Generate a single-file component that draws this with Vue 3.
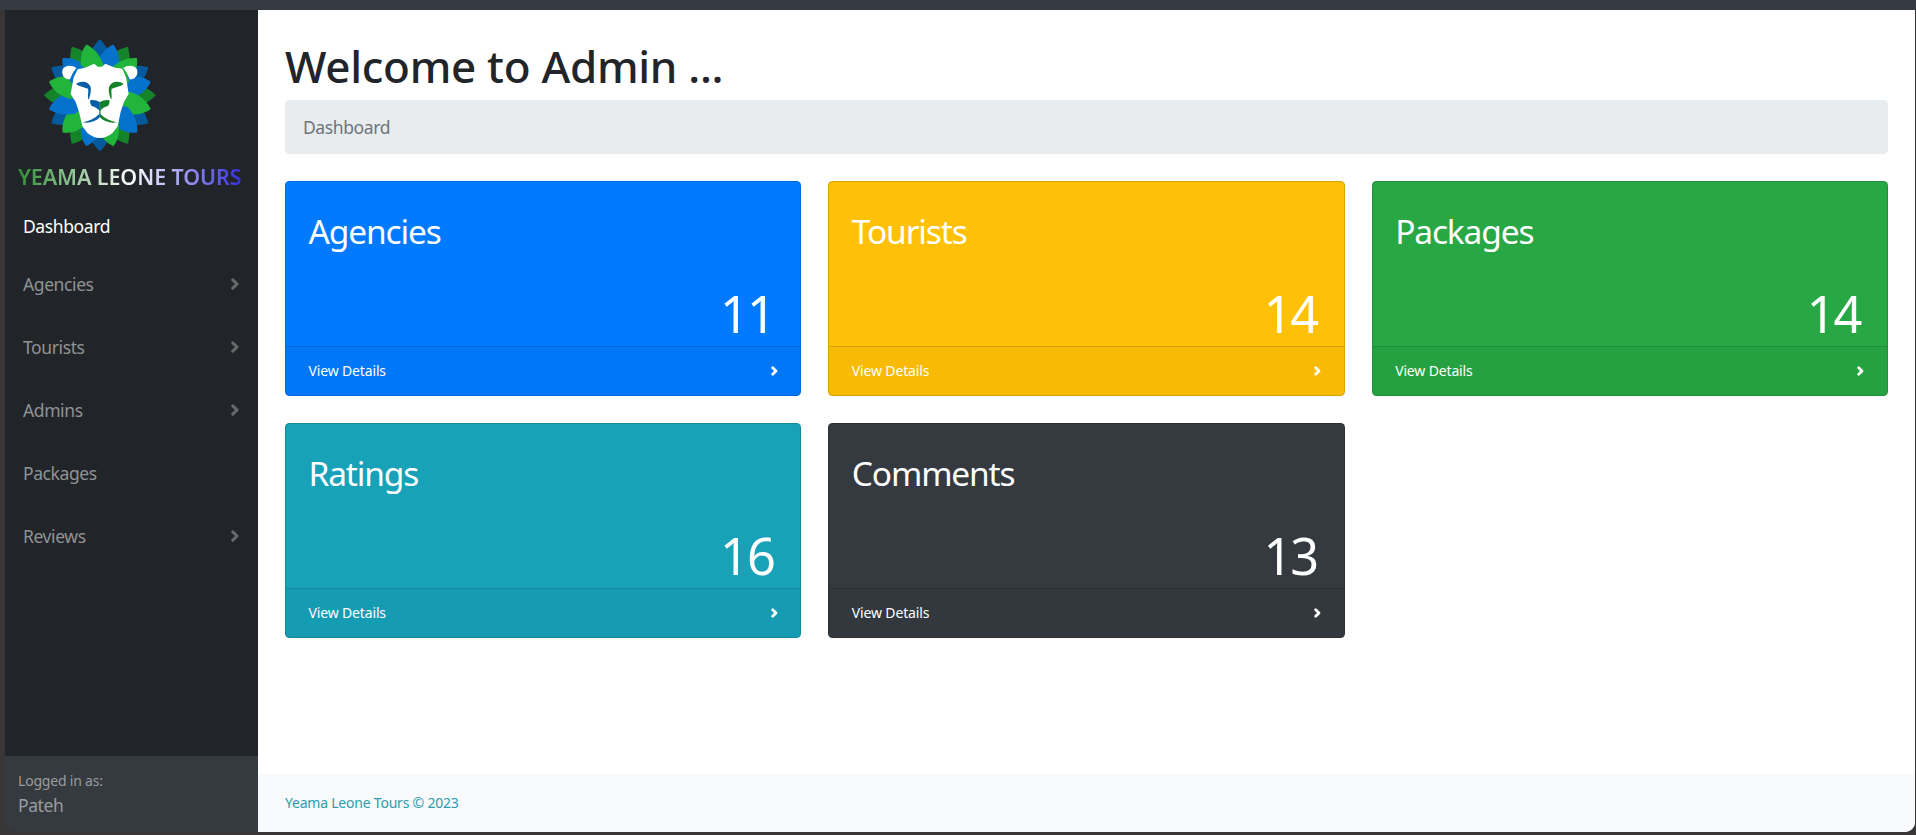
<script setup>
const links = [
  { label: 'Dashboard', active: true },
  { label: 'Agencies', arrow: true },
  { label: 'Tourists', arrow: true },
  { label: 'Admins', arrow: true },
  { label: 'Packages' },
  { label: 'Reviews', arrow: true },
]

const cards = [
  { title: 'Agencies', count: 11, tone: 'primary' },
  { title: 'Tourists', count: 14, tone: 'warning' },
  { title: 'Packages', count: 14, tone: 'success' },
  { title: 'Ratings', count: 16, tone: 'info' },
  { title: 'Comments', count: 13, tone: 'dark' },
]

// mane petals, listed clockwise from the top
const angles = Array.from({ length: 12 }, (_, i) => i * 30)
const blueBack = [0, 60, 120, 180, 240, 300]
const backPetals = angles.map((a) => ({ a, c: blueBack.includes(a) ? '#045a9c' : '#14832a' }))
const frontPetals = angles.map((a, i) => ({
  a: a + 15,
  c: i % 2 ? '#22b53c' : '#0672cb',
}))
</script>

<template>
  <div class="window">
    <div class="topbar"></div>
    <div class="shell">
      <aside class="side">
        <div class="brand">
          <svg class="logo" viewBox="0 0 390 390" width="130" height="130">
            <g transform="translate(194.5 196)">
              <path
                v-for="p in backPetals" :key="'b' + p.a" :fill="p.c"
                :transform="`rotate(${p.a})`"
                d="M0 -168C15 -154 28 -134 32 -112L0 -40L-32 -112C-28 -134 -15 -154 0 -168Z"
              />
              <path
                v-for="p in frontPetals" :key="'f' + p.a" :fill="p.c"
                :transform="`rotate(${p.a})`"
                d="M0 -158C18 -144 32 -120 34 -84L0 -30L-34 -84C-32 -120 -18 -144 0 -158Z"
              />
            </g>
            <path d="M139 106L106 150L112 165L150 115Z" fill="#0672cb" />
            <path d="M250 106L283 150L277 165L239 115Z" fill="#22b53c" />
            <path
              fill="#fff"
              d="M150 113L178 101L188 110H201L211 101L240 113L262 116L273 142L281 192L267 216L257 245L248 289L232 310Q214 324 194.5 324Q175 324 158 310L142 289L132 245L122 216L107 192L116 142L128 118Z"
            />
            <path fill="#fff" d="M124 114C112 105 94 104 85 115C76 130 86 150 105 148Q110 130 124 114Z" />
            <path fill="#fff" d="M265 114C277 105 295 104 304 115C313 130 303 150 284 148Q279 130 265 114Z" />
            <g fill="#045fa5">
              <path d="M123 162C134 154 150 153 160 161C171 169 169 187 161 209C156 199 162 187 159 176C147 172 134 170 123 162Z" />
              <path d="M166 211C175 208 185 211 194.500 216V243C187 235 180 230 170 228C166 222 164 216 166 211Z" />
              <path d="M192.500 240H194.500V262C180 276 160 281 144 277C165 272 180 265 192.500 252Z" />
            </g>
            <g fill="#14832a" transform="translate(389 0) scale(-1 1)">
              <path d="M123 162C134 154 150 153 160 161C171 169 169 187 161 209C156 199 162 187 159 176C147 172 134 170 123 162Z" />
              <path d="M166 211C175 208 185 211 194.500 216V243C187 235 180 230 170 228C166 222 164 216 166 211Z" />
              <path d="M192.500 240H194.500V262C180 276 160 281 144 277C165 272 180 265 192.500 252Z" />
            </g>
          </svg>
          <div class="brand-name">YEAMA LEONE TOURS</div>
        </div>
        <nav class="nav">
          <a v-for="l in links" :key="l.label" class="link" :class="{ active: l.active }">
            <span>{{ l.label }}</span>
            <svg v-if="l.arrow" class="nav-arrow" viewBox="0 0 8 12" width="8" height="12">
              <path d="M1.800 1.800L6 6L1.800 10.200" fill="none" stroke="currentColor" stroke-width="3.100" stroke-linecap="round" stroke-linejoin="round" />
            </svg>
          </a>
        </nav>
        <div class="side-foot">
          <div class="small">Logged in as:</div>
          <div class="user">Pateh</div>
        </div>
      </aside>

      <div class="content">
        <main>
          <h1>Welcome to Admin ...</h1>
          <div class="crumb">Dashboard</div>
          <div class="grid">
            <section v-for="c in cards" :key="c.title" class="card" :class="c.tone">
              <div class="body">
                <div class="title">{{ c.title }}</div>
                <div class="count">{{ c.count }}</div>
              </div>
              <div class="foot">
                <a>View Details</a>
                <svg viewBox="0 0 7 10" width="7" height="10">
                  <path d="M1.700 1.700L5 5L1.700 8.300" fill="none" stroke="#fff" stroke-width="2.700" stroke-linecap="round" stroke-linejoin="round" />
                </svg>
              </div>
            </section>
          </div>
        </main>
        <footer>Yeama Leone Tours © 2023</footer>
      </div>
    </div>
  </div>
</template>

<style>
body {
  margin: 0;
  overflow: hidden;
}
</style>

<style scoped>
.window {
  box-sizing: border-box;
  width: 1916px;
  height: 835px;
  display: flex;
  flex-direction: column;
  background: #393637;
  font-family: "Noto Sans", "Open Sans", sans-serif;
  font-size: 17.5px;
  letter-spacing: -0.4px;
  color: #212529;
}
.topbar {
  height: 10px;
  background: #363a42;
}
.shell {
  display: flex;
  height: 822px;
  margin: 0 1px 0 5px;
  border-radius: 0 0 10px 12px;
  overflow: hidden;
}
.side {
  width: 253px;
  display: flex;
  flex-direction: column;
  background: #212529;
}
.brand {
  height: 185px;
  padding-top: 20px;
  box-sizing: border-box;
}
.logo {
  display: block;
  margin-left: 30px;
}
.brand-name {
  width: 229px;
  margin: 2px 0 0 13px;
  line-height: 30px;
  font-size: 21.5px;
  font-weight: 600;
  letter-spacing: -0.1px;
  white-space: nowrap;
  color: transparent;
  background: linear-gradient(90deg, #2f8f35, #fff 50%, #2a22e0);
  -webkit-background-clip: text;
  background-clip: text;
}
.nav {
  flex: 1;
}
.link {
  display: flex;
  align-items: center;
  justify-content: space-between;
  height: 63px;
  padding: 0 19px 0 18px;
  color: #909294;
}
.link.active {
  height: 57px;
  padding-top: 5px;
  box-sizing: border-box;
  color: #fff;
}
.nav-arrow {
  color: #66696c;
}
.side-foot {
  box-sizing: border-box;
  height: 76px;
  padding: 13.500px 13px 0;
  background: #343a40;
  color: #999c9f;
}
.small {
  font-size: 14px;
  line-height: 22px;
  letter-spacing: -0.2px;
}
.user {
  line-height: 27px;
}
.content {
  flex: 1;
  display: flex;
  flex-direction: column;
  background: #fff;
}
main {
  flex: 1;
  padding: 29px 27px 0;
}
h1 {
  margin: 0 0 7px;
  font-size: 44px;
  line-height: 54px;
  font-weight: 500;
  letter-spacing: -0.3px;
}
.crumb {
  box-sizing: border-box;
  height: 54px;
  margin-bottom: 27px;
  padding: 0 18px;
  border-radius: 4.500px;
  background: #e9ecef;
  color: #6c757d;
  line-height: 55px;
}
.grid {
  display: grid;
  grid-template-columns: repeat(3, 1fr);
  gap: 27px;
}
.card {
  box-sizing: border-box;
  height: 215px;
  display: flex;
  flex-direction: column;
  border: 1px solid rgba(0, 0, 0, 0.15);
  border-radius: 4.500px;
  color: #fff;
}
.body {
  flex: 1;
  padding: 21.500px 22.500px 0;
}
.title {
  line-height: 54px;
  font-size: 33.500px;
  letter-spacing: -1.15px;
}
.count {
  margin-top: 17px;
  padding-right: 4px;
  line-height: 78px;
  height: 60px;
  font-size: 50.500px;
  letter-spacing: -2px;
  text-align: right;
}
.foot {
  box-sizing: border-box;
  height: 49px;
  display: flex;
  align-items: center;
  justify-content: space-between;
  padding: 0 22.500px;
  border-top: 1px solid rgba(0, 0, 0, 0.13);
  background: rgba(0, 0, 0, 0.03);
  font-size: 14px;
  letter-spacing: -0.15px;
}
.foot a {
  padding-bottom: 1px;
}
.primary { background-color: #007bff; }
.warning { background-color: #ffc107; }
.success { background-color: #28a745; }
.info { background-color: #17a2b8; }
.dark { background-color: #343a40; }
footer {
  height: 58px;
  padding: 0 27px;
  line-height: 58px;
  background: #f8f9fa;
  color: #2d9caf;
  font-size: 14px;
  letter-spacing: -0.22px;
}
</style>
